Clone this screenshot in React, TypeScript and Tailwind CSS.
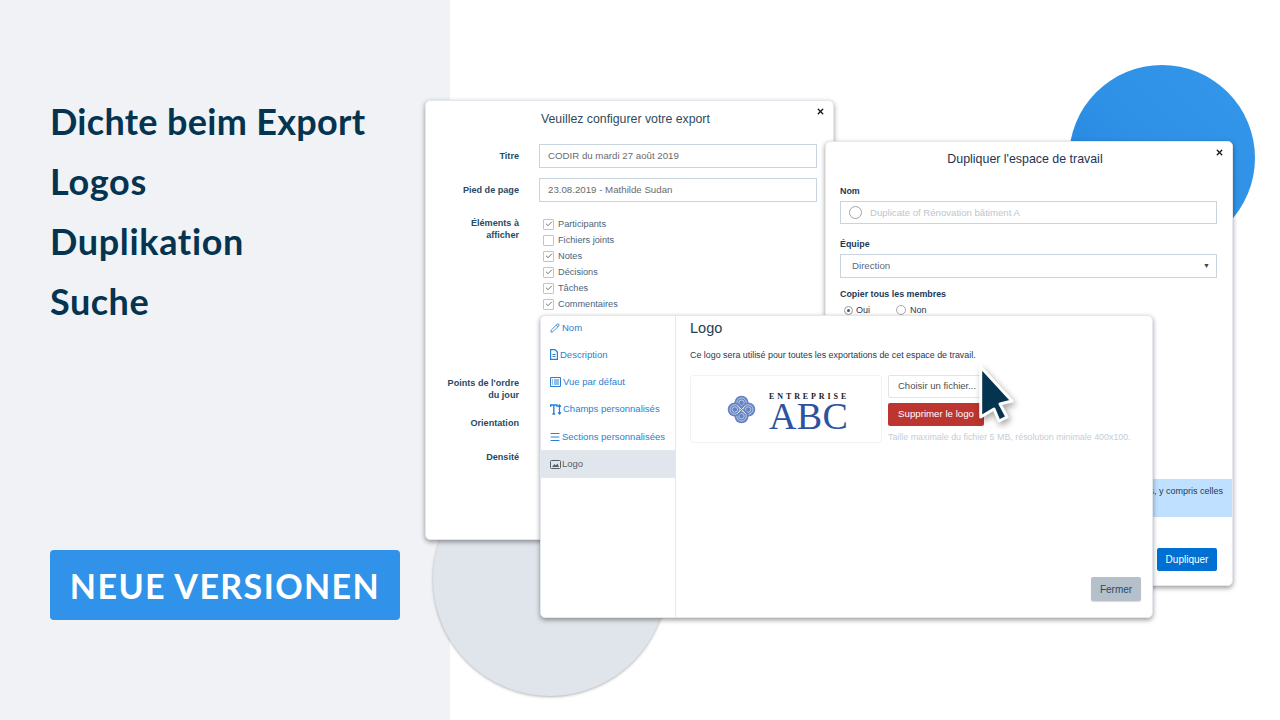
import React from 'react';
import { Pencil, X, Check, Menu } from 'lucide-react';

const checks = [
  { label: 'Participants', on: true },
  { label: 'Fichiers joints', on: false },
  { label: 'Notes', on: true },
  { label: 'Décisions', on: true },
  { label: 'Tâches', on: true },
  { label: 'Commentaires', on: true },
];

const FileIcon = () => (
  <svg width="8" height="11" viewBox="0 0 8 11" fill="none" stroke="currentColor" strokeWidth="1.2">
    <path d="M0.6 0.6H5L7.4 3V10.4H0.6Z" />
    <path d="M2.5 5.5H5.5M2.5 7.5H5.5" />
  </svg>
);

const ListBoxIcon = () => (
  <svg width="11" height="10" viewBox="0 0 11 10" fill="none" stroke="currentColor" strokeWidth="1.1">
    <rect x="0.5" y="0.5" width="10" height="9" rx="1" />
    <path d="M2 3H3M4 3H9M2 5H3M4 5H9M2 7H3M4 7H9" />
  </svg>
);

const TypeIcon = () => (
  <svg width="12" height="11" viewBox="0 0 12 11" fill="none" stroke="currentColor">
    <path d="M0.6 3V1H7V3M3.8 1V10M2.4 10H5.2" strokeWidth="1.4" />
    <path d="M9.5 1V10M8 2.6L9.5 1L11 2.6M8 8.4L9.5 10L11 8.4" strokeWidth="1.2" />
  </svg>
);

const PictureIcon = () => (
  <svg width="11" height="9" viewBox="0 0 11 9" fill="none">
    <rect x="0.5" y="0.5" width="10" height="8" rx="1" stroke="currentColor" />
    <path d="M2 7L4.5 4L6 5.5L7.5 3.5L9 7Z" fill="currentColor" />
  </svg>
);

const menuItems = [
  { label: 'Nom', icon: <Pencil size={10} strokeWidth={2} />, box: 'w-[12px]' },
  { label: 'Description', icon: <FileIcon />, box: 'w-[10px]' },
  { label: 'Vue par défaut', icon: <ListBoxIcon />, box: 'w-[13px]' },
  { label: 'Champs personnalisés', icon: <TypeIcon />, box: 'w-[13px]' },
  { label: 'Sections personnalisées', icon: <Menu size={12} strokeWidth={2} className="-ml-[1px]" />, box: 'w-[12px]' },
];

const Knot = () => (
  <svg width="29" height="29" viewBox="0 0 28 28" fill="none">
    {[
      [14, 7.5],
      [20.5, 14],
      [14, 20.5],
      [7.5, 14],
    ].map(([cx, cy]) => (
      <g key={`${cx}-${cy}`}>
        <circle cx={cx} cy={cy} r="6.8" fill="#6583c2" />
        <circle cx={cx} cy={cy} r="4.6" stroke="#dbe3f3" strokeWidth="0.7" />
        <circle cx={cx} cy={cy} r="2.6" stroke="#dbe3f3" strokeWidth="0.7" />
      </g>
    ))}
    <path d="M10 10L18 18M18 10L10 18" stroke="#dbe3f3" strokeWidth="0.9" />
  </svg>
);

const Cursor = () => (
  <svg width="44" height="66" viewBox="0 0 44 66" className="drop-shadow-[2px_3px_3px_rgba(0,0,0,0.35)]">
    <path d="M3.7 3L3.7 53L17 45L22 57L30 53L23 40L35 37Z" fill="#04344f" stroke="#fff" strokeWidth="3" strokeLinejoin="round" />
  </svg>
);

export default function App() {
  return (
    <div className="relative w-[1280px] h-[720px] overflow-hidden bg-white font-['Liberation_Sans',Arial,sans-serif]">
      <aside className="absolute inset-y-0 left-0 w-[450px] bg-[#f0f2f6] pl-[50px] pt-[91px] font-['Lato',sans-serif]">
        <ul className="text-[36px] leading-[60px] font-bold text-[#04344f]">
          <li className="tracking-[0.3px]">Dichte beim Export</li>
          <li className="tracking-[0.7px]">Logos</li>
          <li className="tracking-[0.66px]">Duplikation</li>
          <li className="tracking-[0.5px]">Suche</li>
        </ul>
        <div className="mt-[219px] w-[350px] h-[70px] rounded-[4px] bg-[#3092e8] flex items-center justify-center text-white text-[34px] font-bold tracking-[1.4px]">
          NEUE VERSIONEN
        </div>
      </aside>

      {/* decorative circles */}
      <div className="absolute left-[1069px] top-[65px] w-[186px] h-[186px] rounded-full bg-gradient-to-bl from-[#3397ea] via-[#2f91e6] to-[#1f80dc]" />
      <div className="absolute left-[433px] top-[462px] w-[234px] h-[234px] rounded-full bg-[#e0e5ec] shadow-[0_1px_3px_rgba(0,0,0,0.3)]" />

      {/* export window */}
      <section className="absolute left-[425px] top-[100px] w-[409px] h-[440px] bg-white rounded-[5px] border border-[#e3e8ee] shadow-[0_2px_5px_rgba(0,0,0,0.4)] text-[#2a4a62]">
        <X size={9} strokeWidth={3.5} className="absolute right-[8px] top-[6px] text-[#111]" />
        <h2 className="pl-[115px] pt-[9px] text-[12.3px] leading-[18px] text-[#2f4a60]">Veuillez configurer votre export</h2>
        <div className="mt-[16px] grid grid-cols-[93px_278px] gap-x-[20px] text-[9.1px] leading-[12px] font-bold">
          <label className="text-right pt-[6px] text-[#274a64]">Titre</label>
          <div className="h-[24px] border border-[#c8d5e0] pl-[8px] flex items-center font-normal text-[#6b6b6b] text-[9.7px]">CODIR du mardi 27 août 2019</div>
          <label className="text-right mt-[10px] pt-[6px] text-[#274a64]">Pied de page</label>
          <div className="mt-[10px] h-[24px] border border-[#c8d5e0] pl-[8px] flex items-center font-normal text-[#6b6b6b] text-[9.7px]">23.08.2019 - Mathilde Sudan</div>
          <label className="text-right mt-[15px] text-[#274a64]">Éléments à<br />afficher</label>
          <ul className="mt-[14px] pl-[4px] font-normal text-[#4b6478] text-[9.2px]">
            {checks.map((c) => (
              <li key={c.label} className="h-[16px] flex items-center gap-[4px]">
                <span className="w-[11px] h-[11px] border border-[#c4c4c4] rounded-[1px] flex items-center justify-center text-[#555]">
                  {c.on && <Check size={8} strokeWidth={2.5} />}
                </span>
                {c.label}
              </li>
            ))}
          </ul>
          <label className="text-right mt-[65px] text-[#274a64]">Points de l'ordre<br />du jour</label>
          <div />
          <label className="text-right mt-[16px] text-[#274a64]">Orientation</label>
          <div />
          <label className="text-right mt-[22px] text-[#274a64]">Densité</label>
          <div />
        </div>
      </section>

      {/* duplicate window */}
      <section className="absolute left-[825px] top-[141px] w-[408px] h-[445px] flex flex-col bg-white rounded-[5px] border border-[#e3e8ee] shadow-[0_2px_5px_rgba(0,0,0,0.4)] text-[#1b3a55]">
        <X size={9} strokeWidth={3.5} className="absolute right-[8px] top-[6px] text-[#111]" />
        <h2 className="pt-[8px] pr-[8px] text-center text-[12.4px] leading-[18px] text-[#1e3450]">Dupliquer l'espace de travail</h2>
        <div className="px-[14px] mt-[17px] text-[8.9px] leading-[12px]">
          <p className="font-bold">Nom</p>
          <div className="mt-[4px] w-[377px] h-[23px] border border-[#c8d5e0] flex items-center pl-[8px] gap-[8px] text-[9.6px] text-[#bcc6cf]">
            <span className="w-[13px] h-[13px] rounded-full border border-[#9aa5ad]" />
            Duplicate of Rénovation bâtiment A
          </div>
          <p className="font-bold mt-[14px]">Équipe</p>
          <div className="mt-[4px] w-[377px] h-[24px] border border-[#c8d5e0] flex items-center justify-between pl-[11px] pr-[6px] text-[9.7px] text-[#5c6b78]">
            Direction
            <span className="text-[7px] text-[#444]">▼</span>
          </div>
          <p className="font-bold mt-[10px]">Copier tous les membres</p>
          <div className="mt-[4px] pl-[4px] flex items-center text-[9px]">
            <span className="w-[9px] h-[9px] rounded-full border border-[#999] flex items-center justify-center mr-[3px]">
              <span className="w-[3px] h-[3px] rounded-full bg-[#555]" />
            </span>
            Oui
            <span className="w-[10px] h-[10px] rounded-full border border-[#aaa] ml-[26px] mr-[4px]" />
            Non
          </div>
        </div>
        <div className="mt-[163px] h-[38px] bg-[#c0e0ff] pr-[9px] pt-[6px] text-right text-[9px] leading-[12px] whitespace-nowrap">
          Tous les espaces seront copiés, y compris celles
        </div>
        <div className="flex justify-end pr-[15px] mt-[31px]">
          <button className="w-[60px] h-[23px] bg-[#0070d2] rounded-[2px] text-white text-[10px]">Dupliquer</button>
        </div>
      </section>

      {/* logo settings window */}
      <section className="absolute left-[540px] top-[315px] w-[613px] h-[303px] flex bg-white rounded-[5px] border border-[#e3e8ee] shadow-[0_2px_5px_rgba(0,0,0,0.4)]">
        <nav className="w-[135px] shrink-0 border-r border-[#e3e8ee] text-[9.5px] text-[#2a80d0]">
          <div className="-mt-[2px]">
            {menuItems.map((m) => (
              <div key={m.label} className="h-[27.3px] pl-[9px] flex items-center whitespace-nowrap">
                <span className={`${m.box} flex items-center shrink-0`}>{m.icon}</span>
                {m.label}
              </div>
            ))}
            <div className="h-[27.5px] pl-[9px] flex items-center bg-[#e1e6ed] text-[#555f68]">
              <span className="w-[12px] flex items-center shrink-0">
                <PictureIcon />
              </span>
              Logo
            </div>
          </div>
        </nav>
        <div className="flex-1 flex flex-col pl-[14px] pr-[11px] pb-[16px]">
          <h3 className="pt-[3px] text-[14.5px] leading-[18px] text-[#263d50]">Logo</h3>
          <p className="mt-[12px] text-[8.9px] leading-[12px] text-[#1b3a55]">Ce logo sera utilisé pour toutes les exportations de cet espace de travail.</p>
          <div className="mt-[14px] flex gap-[6px]">
            <div className="w-[192px] h-[68px] border border-[#f0f2f5] rounded-[3px] flex items-center pl-[36px] gap-[13px]">
              <Knot />
              <div className="w-[80px] pt-[6px] font-['Liberation_Serif',serif]">
                <p className="text-[8px] leading-[8px] font-bold text-[#222] tracking-[2.9px] whitespace-nowrap">ENTREPRISE</p>
                <p className="text-[38px] leading-[30px] text-[#2d52a0] tracking-[0.3px]">ABC</p>
              </div>
            </div>
            <div>
              <div className="w-[97px] h-[23px] border border-[#dfe5ea] rounded-[2px] flex items-center pl-[9px] text-[9.5px] text-[#4b4f52]">Choisir un fichier...</div>
              <div className="mt-[5px] w-[96px] h-[23px] bg-[#bd3530] rounded-[2px] flex items-center justify-center text-[9.7px] text-white">Supprimer le logo</div>
              <p className="mt-[5px] text-[8.9px] leading-[12px] text-[#c5ced6] whitespace-nowrap">Taille maximale du fichier 5 MB, résolution minimale 400x100.</p>
            </div>
          </div>
          <div className="mt-auto flex justify-end">
            <button className="w-[50px] h-[24px] rounded-[2px] bg-[#b5c0ca] text-[10px] text-[#2a4a62] shadow-[0_1px_1px_rgba(0,0,0,0.15)]">Fermer</button>
          </div>
        </div>
      </section>

      <div className="absolute left-[977px] top-[364px]">
        <Cursor />
      </div>
    </div>
  );
}
